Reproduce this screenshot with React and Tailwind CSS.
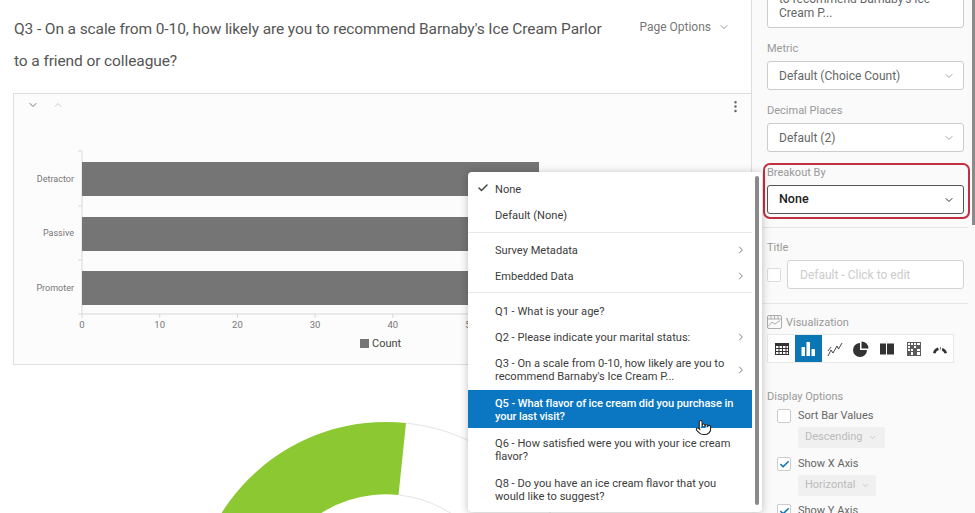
import { Check, ChevronDown, ChevronRight, ChevronUp, EllipsisVertical, Pointer } from "lucide-react";

const bars = [
  { name: "Detractor", y: 162, labelY: 179 },
  { name: "Passive", y: 217, labelY: 233 },
  { name: "Promoter", y: 271, labelY: 288 },
];

const ticks = [0, 10, 20, 30, 40, 50];

const Select = ({ label, active }) => (
  <div
    className={`mt-[6px] flex h-[29px] items-center justify-between rounded-[3px] border bg-white pl-[11px] pr-[8px] ${
      active ? "border-[#555] bg-[#fafafa] text-[12.5px] font-medium text-[#222]" : "border-[#ccc] text-[12px] text-[#666]"
    }`}
  >
    <span>{label}</span>
    <ChevronDown size={12} strokeWidth={active ? 2 : 1.5} className={active ? "text-[#333]" : "text-[#888]"} />
  </div>
);

const FieldLabel = ({ children, className = "" }) => (
  <div className={`h-[14px] text-[11px] leading-[16px] text-[#999] ${className}`}>{children}</div>
);

const MenuItem = ({ children, arrow, checked, selected, two }) => (
  <div
    className={`relative flex items-center justify-between pl-[27px] pr-[5px] text-[11.1px] leading-[13px] ${
      two ? "mb-[2px] h-[38px] pt-[1px]" : "h-[26px]"
    } ${selected ? "bg-[#0b76c1] font-medium tracking-[-0.1px] text-white" : "text-[#3c3c3c]"}`}
  >
    {checked && <Check size={12} strokeWidth={3} className="absolute left-[9px] top-[6px] text-[#444]" />}
    <span className="w-[245px]">{children}</span>
    {arrow && <ChevronRight size={12} strokeWidth={1.5} className="text-[#555]" />}
  </div>
);

const VizIcon = ({ active, children }) => (
  <div className={`flex h-full w-[26.3px] items-center justify-center ${active ? "bg-[#0b76b5] text-white" : "text-[#333]"}`}>
    <svg width="16" height="16" viewBox="0 0 16 16" fill="currentColor">
      {children}
    </svg>
  </div>
);

const CheckRow = ({ label, checked, className = "" }) => (
  <div className={`flex h-[14px] items-center text-[11px] text-[#666] ${className}`}>
    <div className="mr-[7px] flex h-[14px] w-[14px] items-center justify-center rounded-[2px] border border-[#ccc] bg-white">
      {checked && <Check size={11} strokeWidth={3.5} className="text-[#0b76b5]" />}
    </div>
    {label}
  </div>
);

const Disabled = ({ label, className = "" }) => (
  <div className={`ml-[21px] mt-[4px] flex h-[21px] items-center gap-[5px] rounded-[2px] bg-[#f0f0f0] pl-[7px] text-[11px] text-[#bbb] ${className}`}>
    {label}
    <ChevronDown size={9} />
  </div>
);

const Divider = ({ className = "" }) => <div className={`-ml-[4px] -mr-[4px] h-px bg-[#e6e6e6] ${className}`} />;

const App = () => {
  return (
    <div className="relative flex h-[513px] w-[975px] overflow-hidden bg-white font-['Roboto',sans-serif]">
      <div className="w-[752px] shrink-0">
        {/* question title */}
        <div className="flex h-[93px] items-start justify-between border-r border-[#ddd] pl-[14px] pr-[21px] pt-[13px]">
          <h2 className="w-[600px] text-[15.5px] font-normal leading-[32px] tracking-[-0.1px] text-[#555]">
            Q3 - On a scale from 0-10, how likely are you to recommend Barnaby's Ice Cream Parlor to a friend or colleague?
          </h2>
          <div className="mt-[5px] flex items-center gap-[7px] text-[12px] text-[#777]">
            Page Options
            <ChevronDown size={12} strokeWidth={1.5} />
          </div>
        </div>

        {/* chart card */}
        <div className="ml-[13px] h-[272px] border border-[#ddd] bg-[#fcfcfc]">
          <div className="flex h-[39px] items-start justify-between pl-[13px] pr-[8px] pt-[5px] text-[#777]">
            <div className="flex gap-[13px]">
              <ChevronDown size={12} strokeWidth={2} />
              <ChevronUp size={12} strokeWidth={1.5} className="text-[#bbb]" />
            </div>
            <EllipsisVertical size={15} strokeWidth={2} className="text-[#666]" />
          </div>
          <svg width="737" height="231" viewBox="14 133 737 231" className="block">
            <path d="M78 151H82V314M78 206H82M78 260H82M78 314H82H480" fill="none" stroke="#d8d8d8" />
            {ticks.map((t, i) => (
              <g key={t}>
                <path d={`M${82 + i * 77.7} 314V318`} stroke="#d8d8d8" />
                <text x={82 + i * 77.7} y="328" textAnchor="middle" fontSize="9.500" fill="#777">
                  {t}
                </text>
              </g>
            ))}
            {bars.map((b) => (
              <g key={b.name}>
                <rect x="82" y={b.y} width="457" height="34" fill="#757575" />
                <text x="74" y={b.labelY + 3} textAnchor="end" fontSize="9" fill="#777">
                  {b.name}
                </text>
              </g>
            ))}
            <rect x="360" y="339" width="9" height="9" fill="#757575" />
            <text x="372" y="347" fontSize="11" fill="#444">
              Count
            </text>
          </svg>
        </div>

        {/* donut chart, cut off by the window */}
        <svg width="752" height="148" viewBox="0 365 752 148" className="block">
          <path d="M406 423A194 194 0 0 1 580 616M398.500 495A121 121 0 0 1 507 616" fill="none" stroke="#e4e4e4" />
          <path d="M406 423A194 194 0 0 0 192 616H265A121 121 0 0 1 398.500 495Z" fill="#8cc832" />
        </svg>
      </div>

      {/* side panel */}
      <div className="w-[223px] shrink-0 bg-[#fafafa] pl-[15px] pr-[11px]">
        <div className="-mt-[20px] h-[48px] rounded-[3px] border border-[#ccc] bg-white pl-[11px] pt-[11px] text-[12px] leading-[14px] text-[#666]">
          to recommend Barnaby's Ice
          <br />
          Cream P...
        </div>
        <FieldLabel className="mt-[13px]">Metric</FieldLabel>
        <Select label="Default (Choice Count)" />
        <FieldLabel className="mt-[13px]">Decimal Places</FieldLabel>
        <Select label="Default (2)" />

        <div className="-ml-[4px] -mr-[6px] mt-[11px] h-[56px] rounded-[7px] border-2 border-[#c1303f] pl-[2px] pr-[4px]">
          <FieldLabel>Breakout By</FieldLabel>
          <Select label="None" active />
        </div>

        <Divider className="mt-[8px]" />
        <FieldLabel className="mt-[12px]">Title</FieldLabel>
        <div className="mt-[6px] flex items-center">
          <div className="mr-[6px] h-[14px] w-[14px] rounded-[2px] border border-[#ddd] bg-white" />
          <div className="flex h-[29px] flex-1 items-center rounded-[3px] border border-[#d4d4d4] bg-white pl-[12px] text-[12px] text-[#ccc]">
            Default - Click to edit
          </div>
        </div>
        <Divider className="mt-[14px]" />

        <div className="mt-[11px] flex h-[14px] items-center gap-[4px] text-[11px] leading-[16px] text-[#999]">
          <svg width="15" height="14" viewBox="0 0 15 14" fill="none" stroke="#999" strokeWidth="0.8">
            <rect x="0.500" y="0.500" width="14" height="13" rx="1.500" />
            <path d="M0.500 4H14.500M4 0.500V4M7.500 0.500V4M11 0.500V4M1.500 11L5 7L8 9L13 5.500" />
          </svg>
          <span className="pt-[2px]">Visualization</span>
        </div>
        <div className="mt-[5px] flex h-[29px] w-[187px] border border-[#e8e8e8] bg-white pl-[1px]">
          <VizIcon>
            <path fillRule="evenodd" d="M1 2h14v12H1zM2 5v2h2.500V5zM5.500 5v2H8V5zM9 5v2h2.500V5zM12.500 5v2H14V5zM2 8v2h2.500V8zM5.500 8v2H8V8zM9 8v2h2.500V8zM12.500 8v2H14V8zM2 11v2h2.500v-2zM5.500 11v2H8v-2zM9 11v2h2.500v-2zM12.500 11v2H14v-2z" />
          </VizIcon>
          <VizIcon active>
            <rect x="1.500" y="6" width="3.500" height="9" rx="0.500" />
            <rect x="6.500" y="1" width="3.500" height="14" rx="0.500" />
            <rect x="11.500" y="8" width="3.500" height="7" rx="0.500" />
          </VizIcon>
          <VizIcon>
            <path d="M1 15L4 9L6 12L10 5L11.500 8L15 2M1 10L4 6" fill="none" stroke="currentColor" strokeWidth="0.900" />
          </VizIcon>
          <VizIcon>
            <path d="M7 2A7 7 0 1 0 14 9H7Z" />
            <path d="M8.500 0.500A7 7 0 0 1 15.500 7.500H8.500Z" />
          </VizIcon>
          <VizIcon>
            <rect x="1" y="2.500" width="6" height="11" />
            <rect x="8" y="2.500" width="7" height="11" />
          </VizIcon>
          <VizIcon>
            <path
              fillRule="evenodd"
              opacity="0.800"
              d="M1 1h14v14H1zM2 2v2h2V2zM5 2v2h2V2zM8 2v2h2V2zM11 2v2h3V2zM2 5v2h2V5zM8 5v2h2V5zM2 8v2h2V8zM5 8v2h2V8zM11 8v2h3V8zM5 11v3h2v-3zM11 11v3h3v-3z"
            />
          </VizIcon>
          <VizIcon>
            <path d="M1 12A7 7 0 0 1 6 6.500L6.800 9A4.500 4.500 0 0 0 3.500 12.500ZM8 6.300L9 6.500L7.800 10ZM10.500 7A7 7 0 0 1 15 12L12.500 12.500A4.500 4.500 0 0 0 9.800 9.500Z" />
          </VizIcon>
        </div>

        <FieldLabel className="mt-[26px]">Display Options</FieldLabel>
        <div className="ml-[10px] mt-[6px]">
          <CheckRow label="Sort Bar Values" />
          <Disabled label="Descending" className="w-[87px]" />
          <CheckRow label="Show X Axis" checked className="mt-[9px]" />
          <Disabled label="Horizontal" className="w-[78px]" />
          <CheckRow label="Show Y Axis" checked className="mt-[8px]" />
        </div>
      </div>

      {/* panel scrollbar */}
      <div className="absolute right-0 top-0 h-[225px] w-[3px] bg-[#8a8a8a]" />

      {/* breakout menu */}
      <div className="absolute left-[468px] top-[172px] h-[340px] w-[294px] rounded-[4px] bg-white pr-[10px] pt-[4px] shadow-[0_1px_8px_rgba(0,0,0,0.25)]">
        <MenuItem checked>None</MenuItem>
        <MenuItem>Default (None)</MenuItem>
        <div className="mt-[4px] h-px bg-[#e8e8e8]" />
        <div className="mt-[4px]">
          <MenuItem arrow>Survey Metadata</MenuItem>
          <MenuItem arrow>Embedded Data</MenuItem>
        </div>
        <div className="mt-[3px] h-px bg-[#e8e8e8]" />
        <div className="mt-[5px]">
          <MenuItem>Q1 - What is your age?</MenuItem>
          <MenuItem arrow>Q2 - Please indicate your marital status:</MenuItem>
          <MenuItem two arrow>
            Q3 - On a scale from 0-10, how likely are you to recommend Barnaby's Ice Cream P...
          </MenuItem>
          <MenuItem two selected>
            Q5 - What flavor of ice cream did you purchase in your last visit?
          </MenuItem>
          <MenuItem two>Q6 - How satisfied were you with your ice cream flavor?</MenuItem>
          <MenuItem two>Q8 - Do you have an ice cream flavor that you would like to suggest?</MenuItem>
        </div>
        <div className="absolute right-[3px] top-[4px] h-[329px] w-[4px] rounded-full bg-[#8a8a8a]" />
      </div>

      {/* mouse cursor */}
      <Pointer size={17} strokeWidth={1.5} fill="white" className="absolute left-[695px] top-[419px] text-[#222]" />
    </div>
  );
};

export default App;
